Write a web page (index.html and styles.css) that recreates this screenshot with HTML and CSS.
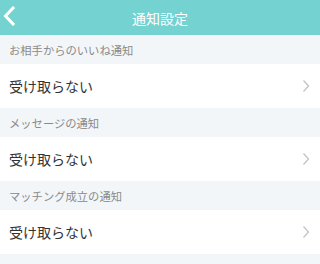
FILE: index.html
```html
<!DOCTYPE html>
<html lang="ja">
<head>
<meta charset="utf-8">
<link rel="stylesheet" href="styles.css">
</head>
<body>
<header class="bar">
  <span class="back"><svg width="14" height="20" viewBox="0 0 14 20"><path d="M11 2 L3.5 10 L11 18" fill="none" stroke="#fff" stroke-width="3" stroke-linecap="square"/></svg></span>
  <h1 class="title">通知設定</h1>
</header>
<section>
  <div class="label">お相手からのいいね通知</div>
  <div class="row"><span>受け取らない</span><svg class="chev" width="8" height="14" viewBox="0 0 8 14"><path d="M1.5 1.5 L6.5 7 L1.5 12.5" fill="none" stroke="#c4c4c8" stroke-width="1.3"/></svg></div>
  <div class="label">メッセージの通知</div>
  <div class="row"><span>受け取らない</span><svg class="chev" width="8" height="14" viewBox="0 0 8 14"><path d="M1.5 1.5 L6.5 7 L1.5 12.5" fill="none" stroke="#c4c4c8" stroke-width="1.3"/></svg></div>
  <div class="label">マッチング成立の通知</div>
  <div class="row"><span>受け取らない</span><svg class="chev" width="8" height="14" viewBox="0 0 8 14"><path d="M1.5 1.5 L6.5 7 L1.5 12.5" fill="none" stroke="#c4c4c8" stroke-width="1.3"/></svg></div>
</section>
</body>
</html>
```
FILE: styles.css
```css
html, body {
  margin: 0;
  padding: 0;
  background: #f3f6f8;
  font-family: "Noto Sans CJK JP", "Noto Sans", sans-serif;
}
.bar {
  height: 35px;
  background: #74d2d1;
  display: flex;
  align-items: center;
  justify-content: center;
  position: relative;
}
.back {
  position: absolute;
  left: 2px;
  top: 6px;
  display: flex;
}
.title {
  margin: 0;
  font-size: 14px;
  font-weight: normal;
  color: #fff;
  line-height: 1;
}
.label {
  height: 29px;
  box-sizing: border-box;
  padding-left: 9px;
  display: flex;
  align-items: center;
  font-size: 11.3px;
  color: #8a8a8a;
}
.row {
  height: 44px;
  background: #fff;
  display: flex;
  align-items: center;
  justify-content: space-between;
  padding: 0 10px 0 9px;
  font-size: 14px;
  color: #333;
}
.chev {
  display: block;
}
```
